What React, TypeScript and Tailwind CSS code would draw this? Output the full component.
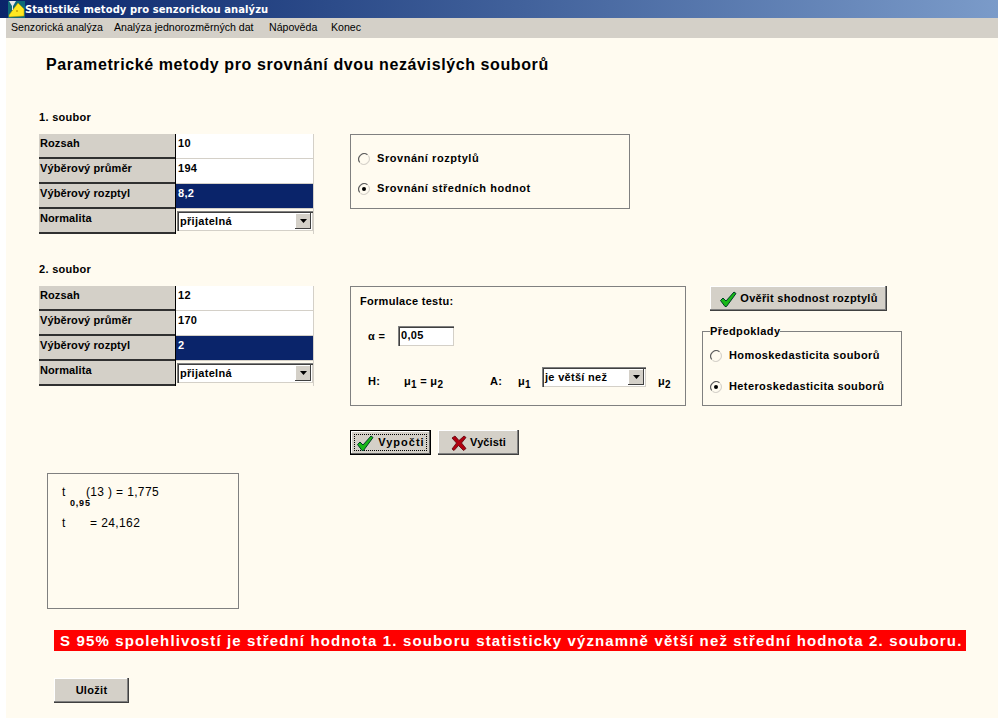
const ui = { fontFamily: '"Liberation Sans", Arial, sans-serif' };

function Check() {
  return (
    <svg width="18" height="18" viewBox="0 0 18 18" className="shrink-0">
      <path d="M1.5 10.5 L4 8 L7 11 L15 2 L17 3.5 L7.5 16.5 L6 16.5 Z" fill="#18b818" stroke="#003c28" strokeWidth="1" strokeLinejoin="round" />
    </svg>
  );
}

function Cross() {
  return (
    <svg width="16" height="16" viewBox="0 0 16 16" className="shrink-0">
      <path d="M1 3 L4 1 L8 5.5 L13 1 L15 2.5 L10.5 8 L15 13.5 L12.5 15.5 L7.5 10.5 L3 15.5 L1 14 L5.5 8 Z" fill="#b00010" stroke="#5a0008" strokeWidth="0.8" strokeLinejoin="round" />
    </svg>
  );
}

function Radio({ on }: { on?: boolean }) {
  return (
    <svg width="12" height="12" viewBox="0 0 12 12" className="shrink-0">
      <circle cx="6" cy="6" r="5" fill="#fffbf0" />
      <path d="M1.8 9.5 A5.5 5.5 0 0 1 9.5 1.8" fill="none" stroke="#606060" strokeWidth="1.2" />
      <path d="M10.2 2.5 A5.5 5.5 0 0 1 2.5 10.2" fill="none" stroke="#d8d4cc" strokeWidth="1.2" />
      {on && <circle cx="6" cy="6" r="2" fill="#000" />}
    </svg>
  );
}

function Arrow() {
  return (
    <div className="w-4 h-4 bg-[#d4d0c8] flex items-center justify-center shadow-[inset_-1px_-1px_0_#404040,inset_1px_1px_0_#ffffff]">
      <svg width="7" height="4" viewBox="0 0 7 4">
        <path d="M0 0 H7 L3.5 4 Z" fill="#000" />
      </svg>
    </div>
  );
}

function Combo({ text, w }: { text: string; w: string }) {
  return (
    <div className={`${w} h-5 bg-white flex items-center justify-between pl-[3px] pr-[2px] shadow-[inset_1px_1px_0_#808080,inset_2px_2px_0_#404040,inset_-1px_-1px_0_#d4d0c8]`}>
      <span className="font-bold text-[11px] tracking-[0.3px] text-black">{text}</span>
      <Arrow />
    </div>
  );
}

function DataTable({ rows, combo }: { rows: string[]; combo: string }) {
  const labels = ['Rozsah', 'Výběrový průměr', 'Výběrový rozptyl', 'Normalita'];
  return (
    <div className="w-[275px] flex flex-col">
      {labels.map((label, i) => (
        <div key={label} className="flex h-[25px]">
          <div className="w-[136px] h-full bg-[#d4d0c8] pl-[1px] pt-[2px] border-b-2 border-b-[#303030] font-bold text-[11px] tracking-[0.1px] text-black leading-[14px]">
            {label}
          </div>
          <div className="w-[1px] bg-black" />
          {i < 3 ? (
            <div className={`w-[138px] h-full pl-[2px] pt-[2px] border-b border-b-[#d4d0c8] border-r border-r-[#d4d0c8] font-bold text-[11px] tracking-[0.3px] leading-[14px] ${i === 2 ? 'bg-[#0a246a] text-white' : 'bg-white text-black'}`}>
              {rows[i]}
            </div>
          ) : (
            <div className="w-[138px] h-full border-r border-r-[#d4d0c8] pl-[1px] pt-[2px]">
              <Combo text={combo} w="w-[136px]" />
            </div>
          )}
        </div>
      ))}
    </div>
  );
}

function Btn({ children, w, def }: { children: React.ReactNode; w: string; def?: boolean }) {
  const inner = 'flex items-center justify-center font-bold text-[11px] text-black';
  if (def) {
    return (
      <div className={`${w} h-[25px] bg-[#d4d0c8] border border-black p-[3px] shadow-[inset_-1px_-1px_0_#606060,inset_1px_1px_0_#ffffff]`}>
        <div className={`${inner} gap-[4px] h-full border border-dotted border-black`}>{children}</div>
      </div>
    );
  }
  return (
    <div className={`${w} h-[25px] bg-[#d4d0c8] ${inner} gap-[3px] shadow-[inset_-1px_-1px_0_#404040,inset_-2px_-2px_0_#808080,inset_1px_1px_0_#ffffff]`}>
      {children}
    </div>
  );
}

export default function App() {
  return (
    <div className="w-[998px] h-[718px] bg-white flex flex-col overflow-hidden" style={ui}>
      <div className="h-[18px] shrink-0 flex items-center pl-[8px] bg-gradient-to-r from-[#0a246a] to-[#7b9bc9]">
        <svg width="17" height="17" viewBox="0 0 17 17" className="shrink-0">
          <rect width="17" height="17" fill="#0f6a78" />
          <path d="M1 14 L10 2 L16 8 L16 15 L1 16 Z" fill="#ffe820" stroke="#b09000" strokeWidth="0.5" />
          <path d="M1 0 L8 0 L5 5 L5 9 L4 9 L4 5 Z" fill="#e8e8e8" />
          <circle cx="9" cy="10" r="1" fill="#c8a000" />
        </svg>
        <span className="font-bold text-[10px] tracking-[0.07px] text-white" style={{ fontFamily: '"DejaVu Sans", sans-serif' }}>
          Statistiké metody pro senzorickou analýzu
        </span>
      </div>

      <div className="h-5 ml-[6px] shrink-0 bg-[#d4d0c8] flex items-center pl-[5px] text-[10.6px] text-black">
        <span className="w-[103px]">Senzorická analýza</span>
        <span className="w-[155px]">Analýza jednorozměrných dat</span>
        <span className="w-[62px]">Nápověda</span>
        <span>Konec</span>
      </div>

      <div className="ml-[6px] flex-1 bg-[#fffbf0] pl-[33px] text-black flex flex-col">
        <h1 className="mt-[18px] ml-[7px] h-[18px] leading-[18px] font-bold text-[16px] tracking-[0.6px]">
          Parametrické metody pro srovnání dvou nezávislých souborů
        </h1>

        <div className="mt-[35px] h-[16px] leading-[16px] font-bold text-[11px] tracking-[0.3px]">1. soubor</div>
        <div className="mt-[9px] flex h-[100px]">
          <DataTable rows={['10', '194', '8,2']} combo="přijatelná" />
          <div className="ml-[36px] w-[280px] h-[75px] border border-[#808080] pl-[7px] pt-[17px] flex flex-col gap-[17px] font-bold text-[11px] tracking-[0.55px]">
            <div className="flex items-center gap-[7px]"><Radio /><span className="leading-[13px]">Srovnání rozptylů</span></div>
            <div className="flex items-center gap-[7px]"><Radio on /><span className="leading-[13px]">Srovnání středních hodnot</span></div>
          </div>
        </div>

        <div className="mt-[27px] h-[16px] leading-[16px] font-bold text-[11px] tracking-[0.3px]">2. soubor</div>
        <div className="mt-[9px] flex h-[120px]">
          <DataTable rows={['12', '170', '2']} combo="přijatelná" />
          <div className="ml-[36px] w-[336px] h-[120px] border border-[#808080] pl-[9px] pt-[7px] font-bold text-[11px] tracking-[0.3px] flex flex-col">
            <div className="leading-[14px]">Formulace testu:</div>
            <div className="mt-[18px] ml-[8px] flex items-center gap-[6px]">
              <span className="w-[24px]">α =</span>
              <div className="w-[56px] h-5 bg-white pl-[3px] leading-[18px] shadow-[inset_1px_1px_0_#808080,inset_2px_2px_0_#404040,inset_-1px_-1px_0_#d4d0c8]">0,05</div>
            </div>
            <div className="mt-[21px] ml-[8px] flex h-5">
              <span className="w-[36px] mt-[6px]">H:</span>
              <span className="w-[86px] mt-[6px]">μ<sub className="text-[10px]">1</sub> = μ<sub className="text-[10px]">2</sub></span>
              <span className="w-[28px] mt-[6px]">A:</span>
              <span className="w-[24px] mt-[6px]">μ<sub className="text-[10px]">1</sub></span>
              <Combo text="je větší než" w="w-[104px]" />
              <span className="ml-[12px] mt-[6px]">μ<sub className="text-[10px]">2</sub></span>
            </div>
          </div>
          <div className="ml-[16px] w-[200px] flex flex-col">
            <div className="ml-[8px]">
              <Btn w="w-[177px]"><Check /><span className="tracking-[0.3px]">Ověřit shodnost rozptylů</span></Btn>
            </div>
            <fieldset className="mt-[14px] h-[81px] border border-[#808080] pl-[7px] font-bold text-[11px] tracking-[0.4px]">
              <legend className="px-0 leading-[13px]">Předpoklady</legend>
              <div className="flex flex-col gap-[18px] mt-[11px]">
                <div className="flex items-center gap-[7px]"><Radio /><span className="leading-[13px]">Homoskedasticita souborů</span></div>
                <div className="flex items-center gap-[7px]"><Radio on /><span className="leading-[13px]">Heteroskedasticita souborů</span></div>
              </div>
            </fieldset>
          </div>
        </div>

        <div className="mt-[24px] ml-[311px] flex gap-[7px]">
          <Btn w="w-[81px]" def><Check /><span className="tracking-[1px]">Vypočti</span></Btn>
          <Btn w="w-[81px]"><Cross /><span className="tracking-[0.1px]">Vyčisti</span></Btn>
        </div>

        <div className="mt-[18px] ml-[8px] w-[192px] h-[136px] border border-[#808080] pl-[14px] pt-[11px] text-[12px] font-normal">
          <div className="flex h-[14px] leading-[14px]">
            <span className="w-[24px]">t</span>
            <span className="tracking-[0.35px]">(13 ) = 1,775</span>
          </div>
          <div className="ml-[8px] h-[8px] leading-[8px] font-bold text-[9px] tracking-[0.8px]">0,95</div>
          <div className="mt-[9px] flex h-[14px] leading-[14px]">
            <span className="w-[28px]">t</span>
            <span className="tracking-[0.4px]">= 24,162</span>
          </div>
        </div>

        <div className="mt-[21px] ml-[15px] w-[912px] h-[21px] bg-[#ff0000] pl-[6px] text-white font-bold text-[15px] tracking-[1.14px] leading-[21px] whitespace-nowrap">
          S 95% spolehlivostí je střední hodnota 1. souboru statisticky významně větší než střední hodnota 2. souboru.
        </div>

        <div className="mt-[27px] ml-[15px]">
          <Btn w="w-[75px]"><span className="tracking-[0.3px]">Uložit</span></Btn>
        </div>
      </div>
    </div>
  );
}
